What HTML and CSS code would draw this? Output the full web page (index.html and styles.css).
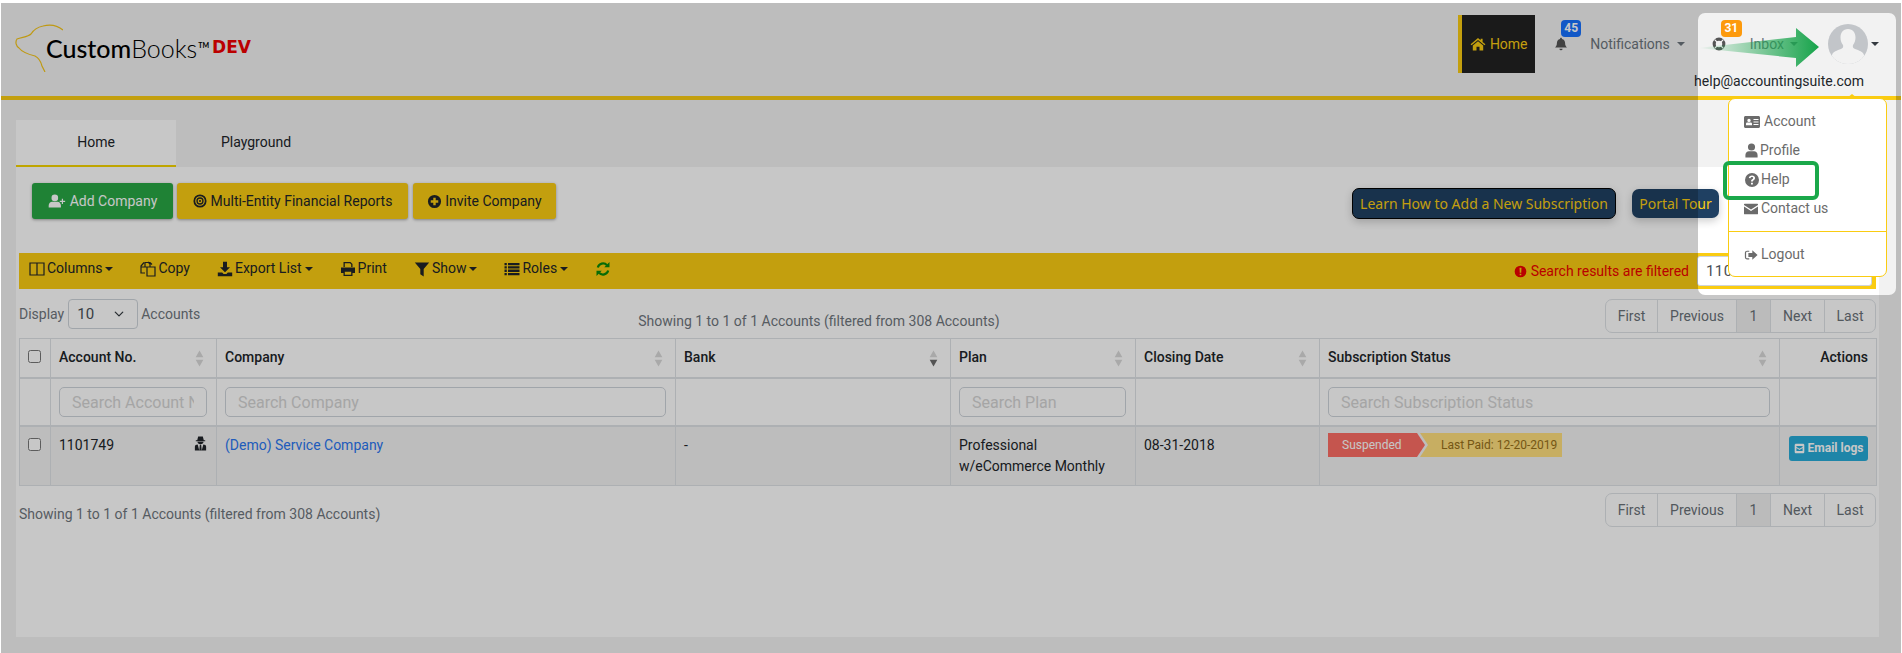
FILE: index.html
```html
<!DOCTYPE html>
<html lang="en">
<head>
  <meta charset="UTF-8">
  <title>CustomBooks</title>
  <link rel="stylesheet" href="styles.css">
</head>
<body>

<svg class="icon-defs" xmlns="http://www.w3.org/2000/svg">
  <symbol id="i-home" viewBox="0 0 16 16"><path d="M8 2 .6 8.2l.9 1L8 3.900l6.500 5.300.9-1-2.800-2.300V2.700h-2v1.600zM2.800 9.600V14.500h3.700v-3.700h3v3.700h3.700V9.600L8 5.300z"/></symbol>
  <symbol id="i-bell" viewBox="0 0 16 16"><path d="M8 .8c.7 0 1.100.5 1.100 1.200v.4c2.400.5 3.600 2.500 3.600 4.800 0 2.700 1 3.700 2.100 4.700H1.200c1.100-1 2.100-2 2.100-4.700 0-2.300 1.200-4.300 3.600-4.800V2C6.900 1.300 7.300.8 8 .8zM6.200 13.300h3.600a1.800 1.800 0 0 1-3.600 0z"/></symbol>
  <symbol id="i-ring" viewBox="0 0 16 16"><circle cx="8" cy="8" r="5.500" fill="none" stroke="currentColor" stroke-width="3.600"/><path d="M3 3l3 3M13 3l-3 3M3 13l3-3M13 13l-3-3" stroke="#f2f2f2" stroke-width="1.300"/></symbol>
  <symbol id="i-columns" viewBox="0 0 16 16"><path d="M1 2h14v12H1zM8 2v12" fill="none" stroke="currentColor" stroke-width="1.200"/></symbol>
  <symbol id="i-copy" viewBox="0 0 16 16"><path d="M5 5.500V1.500h5l2 2h0M6.500 6H5L1 6v-1l3-3.500M7 6h8v9H7zM5 12H1V6M10 6V3l-2-2" fill="none" stroke="currentColor" stroke-width="1.200"/></symbol>
  <symbol id="i-download" viewBox="0 0 16 16"><path d="M6 .8h4v5.400h3L8 11.200 3 6.200h3zM.8 11.400h4.400l1.400 1.500h2.800l1.400-1.500h4.400v3.800H.8z"/></symbol>
  <symbol id="i-print" viewBox="0 0 16 16"><path d="M3.500 1h7l2 2v3h-1.300V3.600L10 2.300H4.800V6H3.500zM1 6.500h14v5.500h-2.500v3h-9v-3H1zM4.800 10.800v3h6.400v-3z"/></symbol>
  <symbol id="i-filter" viewBox="0 0 16 16"><path d="M.8 1.500h14.400L9.700 8v7.500l-3.400-2.200V8z"/></symbol>
  <symbol id="i-list" viewBox="0 0 16 16"><path d="M.5 2h2.300v2.300H.5zM4 2h11.500v2.300H4zM.5 5.300h2.300v2.300H.5zM4 5.300h11.500v2.300H4zM.5 8.600h2.300v2.300H.5zM4 8.600h11.500v2.300H4zM.5 11.900h2.300v2.300H.5zM4 11.900h11.500v2.300H4z"/></symbol>
  <symbol id="i-refresh" viewBox="0 0 16 16"><path d="M2.800 6.500A5.400 5.400 0 0 1 12 4.200M13.200 9.500A5.400 5.400 0 0 1 4 11.800" fill="none" stroke="currentColor" stroke-width="2.200"/><path d="M14.500 1v5.200H9.300zM1.500 15V9.800h5.200z"/></symbol>
  <symbol id="i-user-plus" viewBox="0 0 20 16"><circle cx="7.500" cy="4.500" r="3.800"/><path d="M.5 15.500v-2.300c0-2.900 2-4.400 4-4.400h6c2 0 4 1.500 4 4.400v2.300zM15.500 5.500h1.400v2.300h2.400v1.400h-2.400v2.300h-1.400V9.200h-2.300V7.800h2.300z"/></symbol>
  <symbol id="i-target" viewBox="0 0 16 16"><circle cx="8" cy="8" r="6.500" fill="none" stroke="currentColor" stroke-width="2"/><circle cx="8" cy="8" r="3.400" fill="none" stroke="currentColor" stroke-width="1.500"/><circle cx="8" cy="8" r="1.200"/></symbol>
  <symbol id="i-plus-circle" viewBox="0 0 16 16"><path fill-rule="evenodd" d="M8 1a7 7 0 1 1 0 14A7 7 0 0 1 8 1zM6.700 4v2.700H4v2.600h2.700V12h2.600V9.300H12V6.700H9.300V4z"/></symbol>
  <symbol id="i-card" viewBox="0 0 16 16"><path fill-rule="evenodd" d="M1.500 2h13c.8 0 1.500.7 1.500 1.500v9c0 .8-.7 1.500-1.500 1.500h-13C.700 14 0 13.300 0 12.500v-9C0 2.700.7 2 1.500 2zM5 4.700a1.700 1.700 0 1 0 0 3.400 1.700 1.700 0 0 0 0-3.400zM2 11.300h6V10c0-.9-.7-1.400-1.500-1.400h-3C2.700 8.600 2 9.100 2 10zM9.500 5v1h5V5zM9.500 7.500v1h5v-1zM9.500 10v1h5v-1z"/></symbol>
  <symbol id="i-user" viewBox="0 0 16 16"><circle cx="8" cy="4.300" r="3.800"/><path d="M1.500 15.500v-2.700c0-2.700 1.800-4.100 3.800-4.100h5.400c2 0 3.800 1.400 3.800 4.100v2.700z"/></symbol>
  <symbol id="i-help" viewBox="0 0 16 16"><path fill-rule="evenodd" d="M8 1a7 7 0 1 1 0 14A7 7 0 0 1 8 1zM8 3.500c-1.800 0-3 1-3.200 2.500l1.700.3c.1-.8.700-1.200 1.400-1.200.8 0 1.300.4 1.300 1 0 .5-.4.800-1 1.200-.8.500-1.100 1-1.100 1.900v.4h1.800v-.3c0-.4.200-.6.800-1 .8-.5 1.300-1.100 1.300-2.200 0-1.600-1.200-2.600-3-2.600zM7 10.700v1.900h1.900v-1.900z"/></symbol>
  <symbol id="i-mail" viewBox="0 0 16 16"><path d="M.7 2h14.600c.4 0 .7.300.7.700v.8L8 8.700 0 3.500v-.8c0-.4.300-.7.700-.7zM0 5.200l8 5.200 8-5.200v8.100c0 .4-.3.700-.7.700H.7c-.4 0-.7-.3-.7-.7z"/></symbol>
  <symbol id="i-logout" viewBox="0 0 16 16"><path d="M6 3H3.500C2.200 3 1 4 1 5.500v5C1 12 2.200 13 3.500 13H6v-1.300H3.500c-.6 0-1.100-.5-1.100-1.200v-5c0-.7.500-1.200 1.100-1.200H6zM9.500 2.500 15.500 8l-6 5.500v-3.200H5V5.700h4.500z"/></symbol>
  <symbol id="i-alert" viewBox="0 0 16 16"><path fill-rule="evenodd" d="M8 .8a7.200 7.200 0 1 1 0 14.400A7.200 7.200 0 0 1 8 .8zM6.800 3.500l.3 6h1.800l.3-6zM7 10.700v2h2v-2z"/></symbol>
  <symbol id="i-spy" viewBox="0 0 16 16"><path d="M5.500.5h5l1 4h-7zM3 4.500h10v1.200H3zM4.800 6.200h6.400c0 1.400-1.100 2.500-3.200 2.500S4.800 7.600 4.800 6.200zM2 15.500V11.500C2 9.800 3.200 9 5 9l1.700 6.500zM14 15.500V11.500c0-1.700-1.200-2.500-3-2.500l-1.700 6.500zM7.300 9.300h1.400l.6 6.200H6.700z"/></symbol>
  <symbol id="i-envelope" viewBox="0 0 16 16"><path fill-rule="evenodd" d="M3 1h10c1.100 0 2 .9 2 2v10c0 1.100-.9 2-2 2H3c-1.100 0-2-.9-2-2V3c0-1.100.9-2 2-2zM3.500 4.500v1.200L8 8.500l4.500-2.800V4.500zM3.500 7.200v4.300h9V7.200L8 10z"/></symbol>
  <symbol id="i-sort" viewBox="0 0 10 20"><path fill="#d9d9d9" d="M5 .5 9.500 8.500H.5z"/><path fill="#d9d9d9" d="M5 19.500 9.500 11.500H.5z"/></symbol>
  <symbol id="i-sort-down" viewBox="0 0 10 20"><path fill="#d9d9d9" d="M5 .5 9.500 8.500H.5z"/><path fill="#6b6b6b" d="M5 19.500 9.500 11.500H.5z"/></symbol>
</svg>

<div class="page">
  <header class="topbar">
    <a class="logo" href="#">
      <svg class="logo-dog" viewBox="0 0 50 50" xmlns="http://www.w3.org/2000/svg">
        <path d="M50 8C44 3 38 2 30 4C25 5 21 7 18 12C15 15 9 15 4 17C2 20 3 24 6 26C9 30 14 32 22 34C26 36 28 40 29 44C30 46 31 48 32 50" fill="none" stroke="#f5c518" stroke-width="1.200"/>
      </svg>
      <span class="logo-name"><b>Custom</b>Books<sup>TM</sup></span>
      <span class="logo-dev">DEV</span>
    </a>
    <div class="nav-col">
      <nav class="nav">
        <a class="nav-home" href="#"><svg class="icon"><use href="#i-home"/></svg> Home</a>
        <a class="nav-item nav-notify" href="#">
          <svg class="icon"><use href="#i-bell"/></svg>
          <span class="badge badge-blue">45</span>
          <span class="nav-label">Notifications</span><i class="caret"></i>
        </a>
        <a class="nav-item nav-inbox" href="#">
          <svg class="icon"><use href="#i-ring"/></svg>
          <span class="badge badge-orange">31</span>
          <span class="nav-label">Inbox</span><i class="caret"></i>
        </a>
        <a class="nav-user" href="#">
          <svg class="avatar" viewBox="0 0 40 40" xmlns="http://www.w3.org/2000/svg">
            <defs><clipPath id="avatarClip"><circle cx="20" cy="20" r="20"/></clipPath></defs>
            <g clip-path="url(#avatarClip)">
              <rect width="40" height="40" fill="#c2c5c9"/>
              <path d="M20 5c5 0 7.500 4 7.500 8.500 0 3-1 5.500-2.500 7.500-.5 2 0 3 2 4 4 1.500 8 2.500 9 6v9H4v-9c1-3.500 5-4.500 9-6 2-1 2.500-2 2-4-1.500-2-2.500-4.500-2.500-7.500C12.500 9 15 5 20 5z" fill="#f2f2f2"/>
            </g>
          </svg>
          <i class="caret caret-dark"></i>
        </a>
      </nav>
      <div class="nav-email">help@accountingsuite.com</div>
    </div>
  </header>

  <div class="tabs">
    <a class="tab active" href="#">Home</a>
    <a class="tab" href="#">Playground</a>
  </div>

  <main class="card">
    <div class="actions">
      <button class="btn btn-green"><svg class="icon icon-wide"><use href="#i-user-plus"/></svg> Add Company</button>
      <button class="btn btn-gold btn-multi"><svg class="icon"><use href="#i-target"/></svg> Multi-Entity Financial Reports</button>
      <button class="btn btn-gold btn-invite"><svg class="icon"><use href="#i-plus-circle"/></svg> Invite Company</button>
      <button class="btn-dark btn-learn">Learn How to Add a New Subscription</button>
      <button class="btn-dark btn-tour">Portal Tour</button>
    </div>

    <div class="toolbar">
      <a class="tool" href="#"><svg class="icon"><use href="#i-columns"/></svg>Columns<i class="caret"></i></a>
      <a class="tool" href="#"><svg class="icon"><use href="#i-copy"/></svg>Copy</a>
      <a class="tool" href="#"><svg class="icon"><use href="#i-download"/></svg>Export List<i class="caret"></i></a>
      <a class="tool" href="#"><svg class="icon"><use href="#i-print"/></svg>Print</a>
      <a class="tool" href="#"><svg class="icon"><use href="#i-filter"/></svg>Show<i class="caret"></i></a>
      <a class="tool" href="#"><svg class="icon"><use href="#i-list"/></svg>Roles<i class="caret"></i></a>
      <a class="tool tool-refresh" href="#"><svg class="icon"><use href="#i-refresh"/></svg></a>
      <span class="filtered"><svg class="icon"><use href="#i-alert"/></svg>Search results are filtered</span>
      <input class="toolbar-search" type="text" value="1101749">
    </div>

    <div class="controls">
      <label class="length">Display
        <select class="length-select"><option>10</option></select>
        Accounts</label>
      <div class="info info-top">Showing 1 to 1 of 1 Accounts (filtered from 308 Accounts)</div>
      <ul class="pager">
        <li>First</li><li>Previous</li><li class="current">1</li><li>Next</li><li>Last</li>
      </ul>
    </div>

    <table class="accounts">
      <colgroup>
        <col class="c-check"><col class="c-account"><col class="c-company"><col class="c-bank">
        <col class="c-plan"><col class="c-closing"><col class="c-status"><col class="c-actions">
      </colgroup>
      <thead>
        <tr class="head-row">
          <th><input type="checkbox"></th>
          <th>Account No.<svg class="sort"><use href="#i-sort"/></svg></th>
          <th>Company<svg class="sort"><use href="#i-sort"/></svg></th>
          <th>Bank<svg class="sort"><use href="#i-sort-down"/></svg></th>
          <th>Plan<svg class="sort"><use href="#i-sort"/></svg></th>
          <th>Closing Date<svg class="sort"><use href="#i-sort"/></svg></th>
          <th>Subscription Status<svg class="sort"><use href="#i-sort"/></svg></th>
          <th class="th-actions">Actions</th>
        </tr>
        <tr class="filter-row">
          <th></th>
          <th><input class="filter" type="text" placeholder="Search Account No."></th>
          <th><input class="filter" type="text" placeholder="Search Company"></th>
          <th></th>
          <th><input class="filter" type="text" placeholder="Search Plan"></th>
          <th></th>
          <th><input class="filter" type="text" placeholder="Search Subscription Status"></th>
          <th></th>
        </tr>
      </thead>
      <tbody>
        <tr class="data-row">
          <td><input type="checkbox"></td>
          <td>1101749<svg class="spy"><use href="#i-spy"/></svg></td>
          <td><a class="company-link" href="#">(Demo) Service Company</a></td>
          <td>-</td>
          <td>Professional w/eCommerce Monthly</td>
          <td>08-31-2018</td>
          <td>
            <div class="status">
              <span class="status-paid">Last Paid: 12-20-2019</span>
              <span class="status-gap"></span>
              <span class="status-state">Suspended</span>
            </div>
          </td>
          <td class="td-actions"><a class="btn-logs" href="#"><svg class="icon"><use href="#i-envelope"/></svg>Email logs</a></td>
        </tr>
      </tbody>
    </table>

    <div class="controls controls-bottom">
      <div class="info info-bottom">Showing 1 to 1 of 1 Accounts (filtered from 308 Accounts)</div>
      <ul class="pager">
        <li>First</li><li>Previous</li><li class="current">1</li><li>Next</li><li>Last</li>
      </ul>
    </div>
  </main>

  <!-- tour overlay: dims the page except the hole -->
  <div class="tour-hole"></div>

  <div class="user-dropdown">
    <a class="drop-item" href="#"><svg class="icon icon-card"><use href="#i-card"/></svg>Account</a>
    <a class="drop-item drop-profile" href="#"><svg class="icon icon-user"><use href="#i-user"/></svg>Profile</a>
    <a class="drop-item drop-help" href="#"><svg class="icon icon-big"><use href="#i-help"/></svg>Help</a>
    <a class="drop-item" href="#"><svg class="icon"><use href="#i-mail"/></svg>Contact us</a>
    <div class="drop-divider"></div>
    <a class="drop-item" href="#"><svg class="icon"><use href="#i-logout"/></svg>Logout</a>
  </div>

  <svg class="tour-arrow" viewBox="0 0 124 42" xmlns="http://www.w3.org/2000/svg">
    <defs>
      <linearGradient id="arrowFade" x1="0" x2="1" y1="0" y2="0">
        <stop offset="0" stop-color="#16a34a" stop-opacity="0"/>
        <stop offset="1" stop-color="#16a34a"/>
      </linearGradient>
    </defs>
    <path d="M1 21 99 10V1L122 20 99 40V31z" fill="url(#arrowFade)"/>
  </svg>
  <div class="tour-mark"></div>
</div>

</body>
</html>
```

FILE: styles.css
```css
* {
  box-sizing: border-box;
}

html, body {
  height: 100%;
}

body {
  margin: 0;
  overflow: hidden;
  font-family: Roboto, "Liberation Sans", sans-serif;
  font-size: 14px;
  line-height: 21px;
  color: #212529;
  background-color: #f2f2f2;
}

a {
  color: inherit;
  text-decoration: none;
}

.icon-defs {
  display: none;
}

.icon {
  width: 14px;
  height: 14px;
  fill: currentColor;
  flex: none;
}

.caret {
  display: inline-block;
  width: 0;
  height: 0;
  margin-left: 3px;
  border-top: 4px solid currentColor;
  border-left: 4px solid transparent;
  border-right: 4px solid transparent;
}

.page {
  position: relative;
  height: 653px;
  border-top: 3px solid #fff;
  border-left: 1px solid #fff;
  border-right: 1px solid #fff;
  overflow: hidden;
}

/* top bar */
.topbar {
  display: flex;
  justify-content: space-between;
  height: 97px;
  border-bottom: 4px solid #facc12;
}

.logo {
  display: flex;
  align-items: flex-start;
  padding: 20px 0 0 12px;
}

.logo-dog {
  width: 50px;
  height: 50px;
  margin-right: -17px;
  margin-top: -1px;
}

.logo-name {
  margin-top: 8px;
  font-family: Lato, sans-serif;
  font-size: 25px;
  line-height: 34px;
  font-weight: 300;
  color: #000;
}

.logo-name b {
  font-weight: 500;
}

.logo-name sup {
  position: relative;
  top: -10px;
  margin-left: 1px;
  font-size: 7px;
  line-height: 0;
  font-weight: 700;
  vertical-align: baseline;
}

.logo-dev {
  margin: 11px 0 0 3px;
  font-family: "DejaVu Sans", sans-serif;
  font-size: 17px;
  line-height: 26px;
  font-weight: 700;
  color: #f00000;
}

.nav-col {
  display: flex;
  flex-direction: column;
  align-items: flex-end;
  padding: 12px 21px 0 0;
}

.nav {
  display: flex;
  align-items: center;
  height: 58px;
}

.nav-home {
  display: flex;
  align-items: center;
  justify-content: center;
  gap: 4px;
  width: 77px;
  height: 58px;
  margin-right: 19px;
  border-left: 4px solid #facc12;
  background-color: #222;
  color: #facc12;
  font-size: 14px;
}

.nav-home .icon {
  width: 16px;
  height: 16px;
}

.nav-item {
  position: relative;
  display: flex;
  align-items: center;
  color: #6c757d;
}

.nav-notify .icon {
  width: 14px;
  height: 16px;
  color: #555;
}

.nav-notify {
  margin-right: 27px;
}

.nav-notify .nav-label {
  margin-left: 22px;
}

.nav-notify .caret {
  margin-left: 7px;
}

.nav-inbox {
  margin-right: 30px;
}

.nav-inbox .icon {
  color: #555;
}

.nav-inbox .nav-label {
  margin-left: 24px;
}

.nav-inbox .caret {
  margin-left: 6px;
}

.badge {
  position: absolute;
  top: -14px;
  left: 7px;
  width: 20px;
  height: 17px;
  border-radius: 4px;
  color: #fff;
  font-size: 12px;
  line-height: 17px;
  font-weight: 700;
  text-align: center;
}

.badge-blue {
  background-color: #1771ff;
}

.badge-orange {
  left: 9px;
  width: 21px;
  background-color: #fd9a0c;
}

.nav-user {
  display: flex;
  align-items: center;
}

.avatar {
  width: 40px;
  height: 40px;
}

.caret-dark {
  color: #343a40;
  margin-left: 3px;
  margin-right: 1px;
}

.nav-email {
  margin: -1px 16px 0 0;
  font-size: 14px;
  line-height: 18px;
  color: #212529;
}

/* tabs */
.tabs {
  display: flex;
  margin: 20px 0 0 15px;
}

.tab {
  width: 160px;
  height: 47px;
  line-height: 44px;
  text-align: center;
  font-size: 14px;
}

.tab.active {
  background-color: #fff;
  border-bottom: 2px solid #f5d400;
}

/* main card */
.card {
  width: 1863px;
  height: 470px;
  margin-left: 15px;
  padding: 16px 3px 0;
  background-color: #fff;
}

.actions {
  display: flex;
  align-items: flex-start;
  gap: 4px;
  padding-left: 13px;
  height: 70px;
}

.btn {
  display: flex;
  align-items: center;
  justify-content: center;
  gap: 4px;
  height: 36px;
  padding: 0;
  border: 0;
  border-radius: 3px;
  font-family: inherit;
  font-size: 14px;
  box-shadow: 0 1px 3px rgba(0, 0, 0, .35);
}

.btn-green {
  width: 141px;
  background-color: #28a745;
  color: #fff;
}

.btn-gold {
  background-color: #facc12;
  color: #212529;
}

.btn-multi {
  width: 231px;
}

.btn-invite {
  width: 143px;
  margin-left: 1px;
}

.btn-invite .icon {
  width: 15px;
  height: 15px;
  margin-right: -1px;
}

.icon-wide {
  width: 18px;
}

.btn-dark {
  height: 31px;
  border-radius: 7px;
  background-color: #1f4062;
  color: #facc12;
  font-family: "Noto Sans", sans-serif;
  font-size: 14px;
  box-shadow: 0 3px 8px rgba(0, 0, 0, .2);
}

.btn-learn {
  width: 264px;
  margin: 5px 0 0 auto;
  border: 1px solid #000;
  padding: 0;
}

.btn-tour {
  width: 87px;
  height: 29px;
  margin: 6px 157px 0 12px;
  border: 0;
  padding: 0;
}

/* toolbar */
.toolbar {
  display: flex;
  align-items: center;
  gap: 27px;
  height: 36px;
  padding: 0 4px 0 10px;
  background-color: #facc12;
}

.tool {
  display: flex;
  align-items: center;
  margin-top: -5px;
  color: #212529;
}

.tool .icon {
  width: 16px;
  height: 16px;
  margin-right: 2px;
}

.tool-refresh {
  color: #0a8a0a;
}

.filtered {
  display: flex;
  align-items: center;
  gap: 4px;
  margin-left: auto;
  color: #ee0000;
}

.filtered .icon {
  width: 13px;
  height: 13px;
}

.toolbar-search {
  width: 175px;
  height: 30px;
  margin-left: -19px;
  padding: 0 8px;
  border: 1px solid #ced4da;
  border-radius: 3px;
  background-color: #fff;
  font: inherit;
  font-size: 15px;
  letter-spacing: .4px;
  color: #495057;
}

/* length + info + pagination */
.controls {
  display: flex;
  align-items: flex-start;
  height: 49px;
  padding-top: 10px;
  color: #6f767d;
}

.length {
  display: flex;
  align-items: center;
  gap: 4px;
  height: 30px;
}

.length-select {
  width: 70px;
  height: 30px;
  margin: 0 -1px 0 0;
  padding: 0 8px;
  border: 1px solid #ced4da;
  border-radius: 4px;
  appearance: none;
  background: #fff url("data:image/svg+xml,%3Csvg xmlns='http://www.w3.org/2000/svg' viewBox='0 0 16 16'%3E%3Cpath fill='none' stroke='%23343a40' stroke-width='2' stroke-linecap='round' stroke-linejoin='round' d='M2 5l6 6 6-6'/%3E%3C/svg%3E") no-repeat right 12px center / 12px 10px;
  font: inherit;
  font-size: 15px;
  color: #495057;
}

.info-top {
  margin: 12px 0 0 438px;
}

.pager {
  display: flex;
  height: 34px;
  margin: 0 0 0 auto;
  padding: 0;
  list-style: none;
  border: 1px solid #dee2e6;
  border-radius: 7px;
  overflow: hidden;
}

.pager li {
  line-height: 32px;
  text-align: center;
  border-left: 1px solid #dee2e6;
  color: #6a7178;
}

.pager li:first-child {
  width: 51px;
  border-left: 0;
}

.pager li:nth-child(2) { width: 79px; }
.pager li:nth-child(3) { width: 34px; }
.pager li:nth-child(4) { width: 54px; }
.pager li:nth-child(5) { width: 51px; }

.pager .current {
  background-color: #f0f0f0;
}

.controls-bottom {
  align-items: center;
  height: 35px;
  margin-top: 6px;
  padding-top: 0;
}

.info-bottom {
  margin-top: 9px;
}

/* table */
.accounts {
  width: 1857px;
  table-layout: fixed;
  border-collapse: collapse;
}

.c-check { width: 31px; }
.c-account { width: 166px; }
.c-company { width: 459px; }
.c-bank { width: 275px; }
.c-plan { width: 185px; }
.c-closing { width: 184px; }
.c-status { width: 460px; }
.c-actions { width: 97px; }

.accounts th,
.accounts td {
  position: relative;
  padding: 8px 8px;
  border: 1px solid #dee2e6;
  text-align: left;
  vertical-align: top;
}

.head-row th {
  height: 37px;
  font-weight: 500;
  border-bottom-width: 2px;
}

.th-actions {
  text-align: right !important;
}

.accounts th:first-child input,
.accounts td:first-child input {
  margin: 3px 0 0;
  width: 13px;
  height: 13px;
}

.sort {
  position: absolute;
  right: 12px;
  top: 11px;
  width: 9px;
  height: 17px;
}

.filter-row th {
  height: 47px;
  padding: 8px 9px 8px 8px;
  border-bottom-width: 2px;
  font-weight: 400;
}

.filter {
  display: block;
  width: 100%;
  height: 30px;
  padding: 0 12px;
  border: 1px solid #ced4da;
  border-radius: 5px;
  background-color: #fff;
  font: inherit;
  font-size: 16px;
}

.filter::placeholder {
  color: #d4d4d4;
}

.data-row td {
  height: 57px;
  background-color: #f2f2f2;
}

.spy {
  position: absolute;
  right: 8px;
  top: 9px;
  width: 15px;
  height: 15px;
  fill: #212529;
}

.company-link {
  color: #2a76f0;
}

.status {
  position: relative;
  height: 24px;
  margin-top: -2px;
  font-size: 12px;
  line-height: 24px;
  white-space: nowrap;
}

.status-paid {
  display: block;
  width: 234px;
  height: 24px;
  padding-left: 113px;
  color: #96701a;
  background-color: #ffdf7e;
}

.status-gap {
  position: absolute;
  left: 0;
  top: 0;
  width: 100px;
  height: 24px;
  background-color: #f2f2f2;
  clip-path: polygon(0 0, 92px 0, 100px 50%, 92px 100%, 0 100%);
}

.status-state {
  position: absolute;
  left: 0;
  top: 0;
  width: 97px;
  height: 24px;
  padding-left: 14px;
  color: #fff;
  background-color: #fd6e64;
  clip-path: polygon(0 0, 89px 0, 97px 50%, 89px 100%, 0 100%);
}

.td-actions {
  padding: 9px 9px 0 !important;
  text-align: right !important;
}

.btn-logs {
  display: inline-flex;
  align-items: center;
  gap: 3px;
  height: 25px;
  width: 79px;
  justify-content: center;
  border-radius: 3px;
  background-color: #27abd8;
  color: #fff;
  font-size: 12px;
  font-weight: 700;
}

.btn-logs .icon {
  width: 11px;
  height: 11px;
}

/* tour overlay */
.tour-hole {
  position: absolute;
  left: 1697px;
  top: 10px;
  width: 198px;
  height: 282px;
  border-radius: 7px;
  box-shadow: 0 0 0 2000px rgba(0, 0, 0, .22);
}

.user-dropdown {
  position: absolute;
  left: 1727px;
  top: 95px;
  width: 159px;
  height: 179px;
  padding: 8px 0;
  border: 1px solid #facc12;
  border-radius: 7px;
  background-color: #fff;
  color: #6b6b6b;
}

.user-dropdown::before {
  content: "";
  position: absolute;
  left: 118px;
  top: -5px;
  border-bottom: 4px solid #facc12;
  border-left: 5px solid transparent;
  border-right: 5px solid transparent;
}

.drop-item {
  display: flex;
  align-items: center;
  gap: 3px;
  height: 29px;
  padding-left: 15px;
}

.icon-card {
  width: 16px;
  height: 16px;
  margin-right: 1px;
}

.icon-big {
  width: 16px;
  height: 16px;
}

.icon-user {
  width: 15px;
  height: 15px;
}

.drop-profile {
  gap: 1px;
}

.drop-help {
  gap: 1px;
}

.drop-divider {
  height: 1px;
  margin: 8px 0;
  background-color: #facc12;
}

.tour-arrow {
  position: absolute;
  left: 1696px;
  top: 24px;
  width: 124px;
  height: 42px;
}

.tour-mark {
  position: absolute;
  left: 1722px;
  top: 158px;
  width: 96px;
  height: 39px;
  border: 4px solid #1aa84a;
  border-radius: 6px;
}
```
